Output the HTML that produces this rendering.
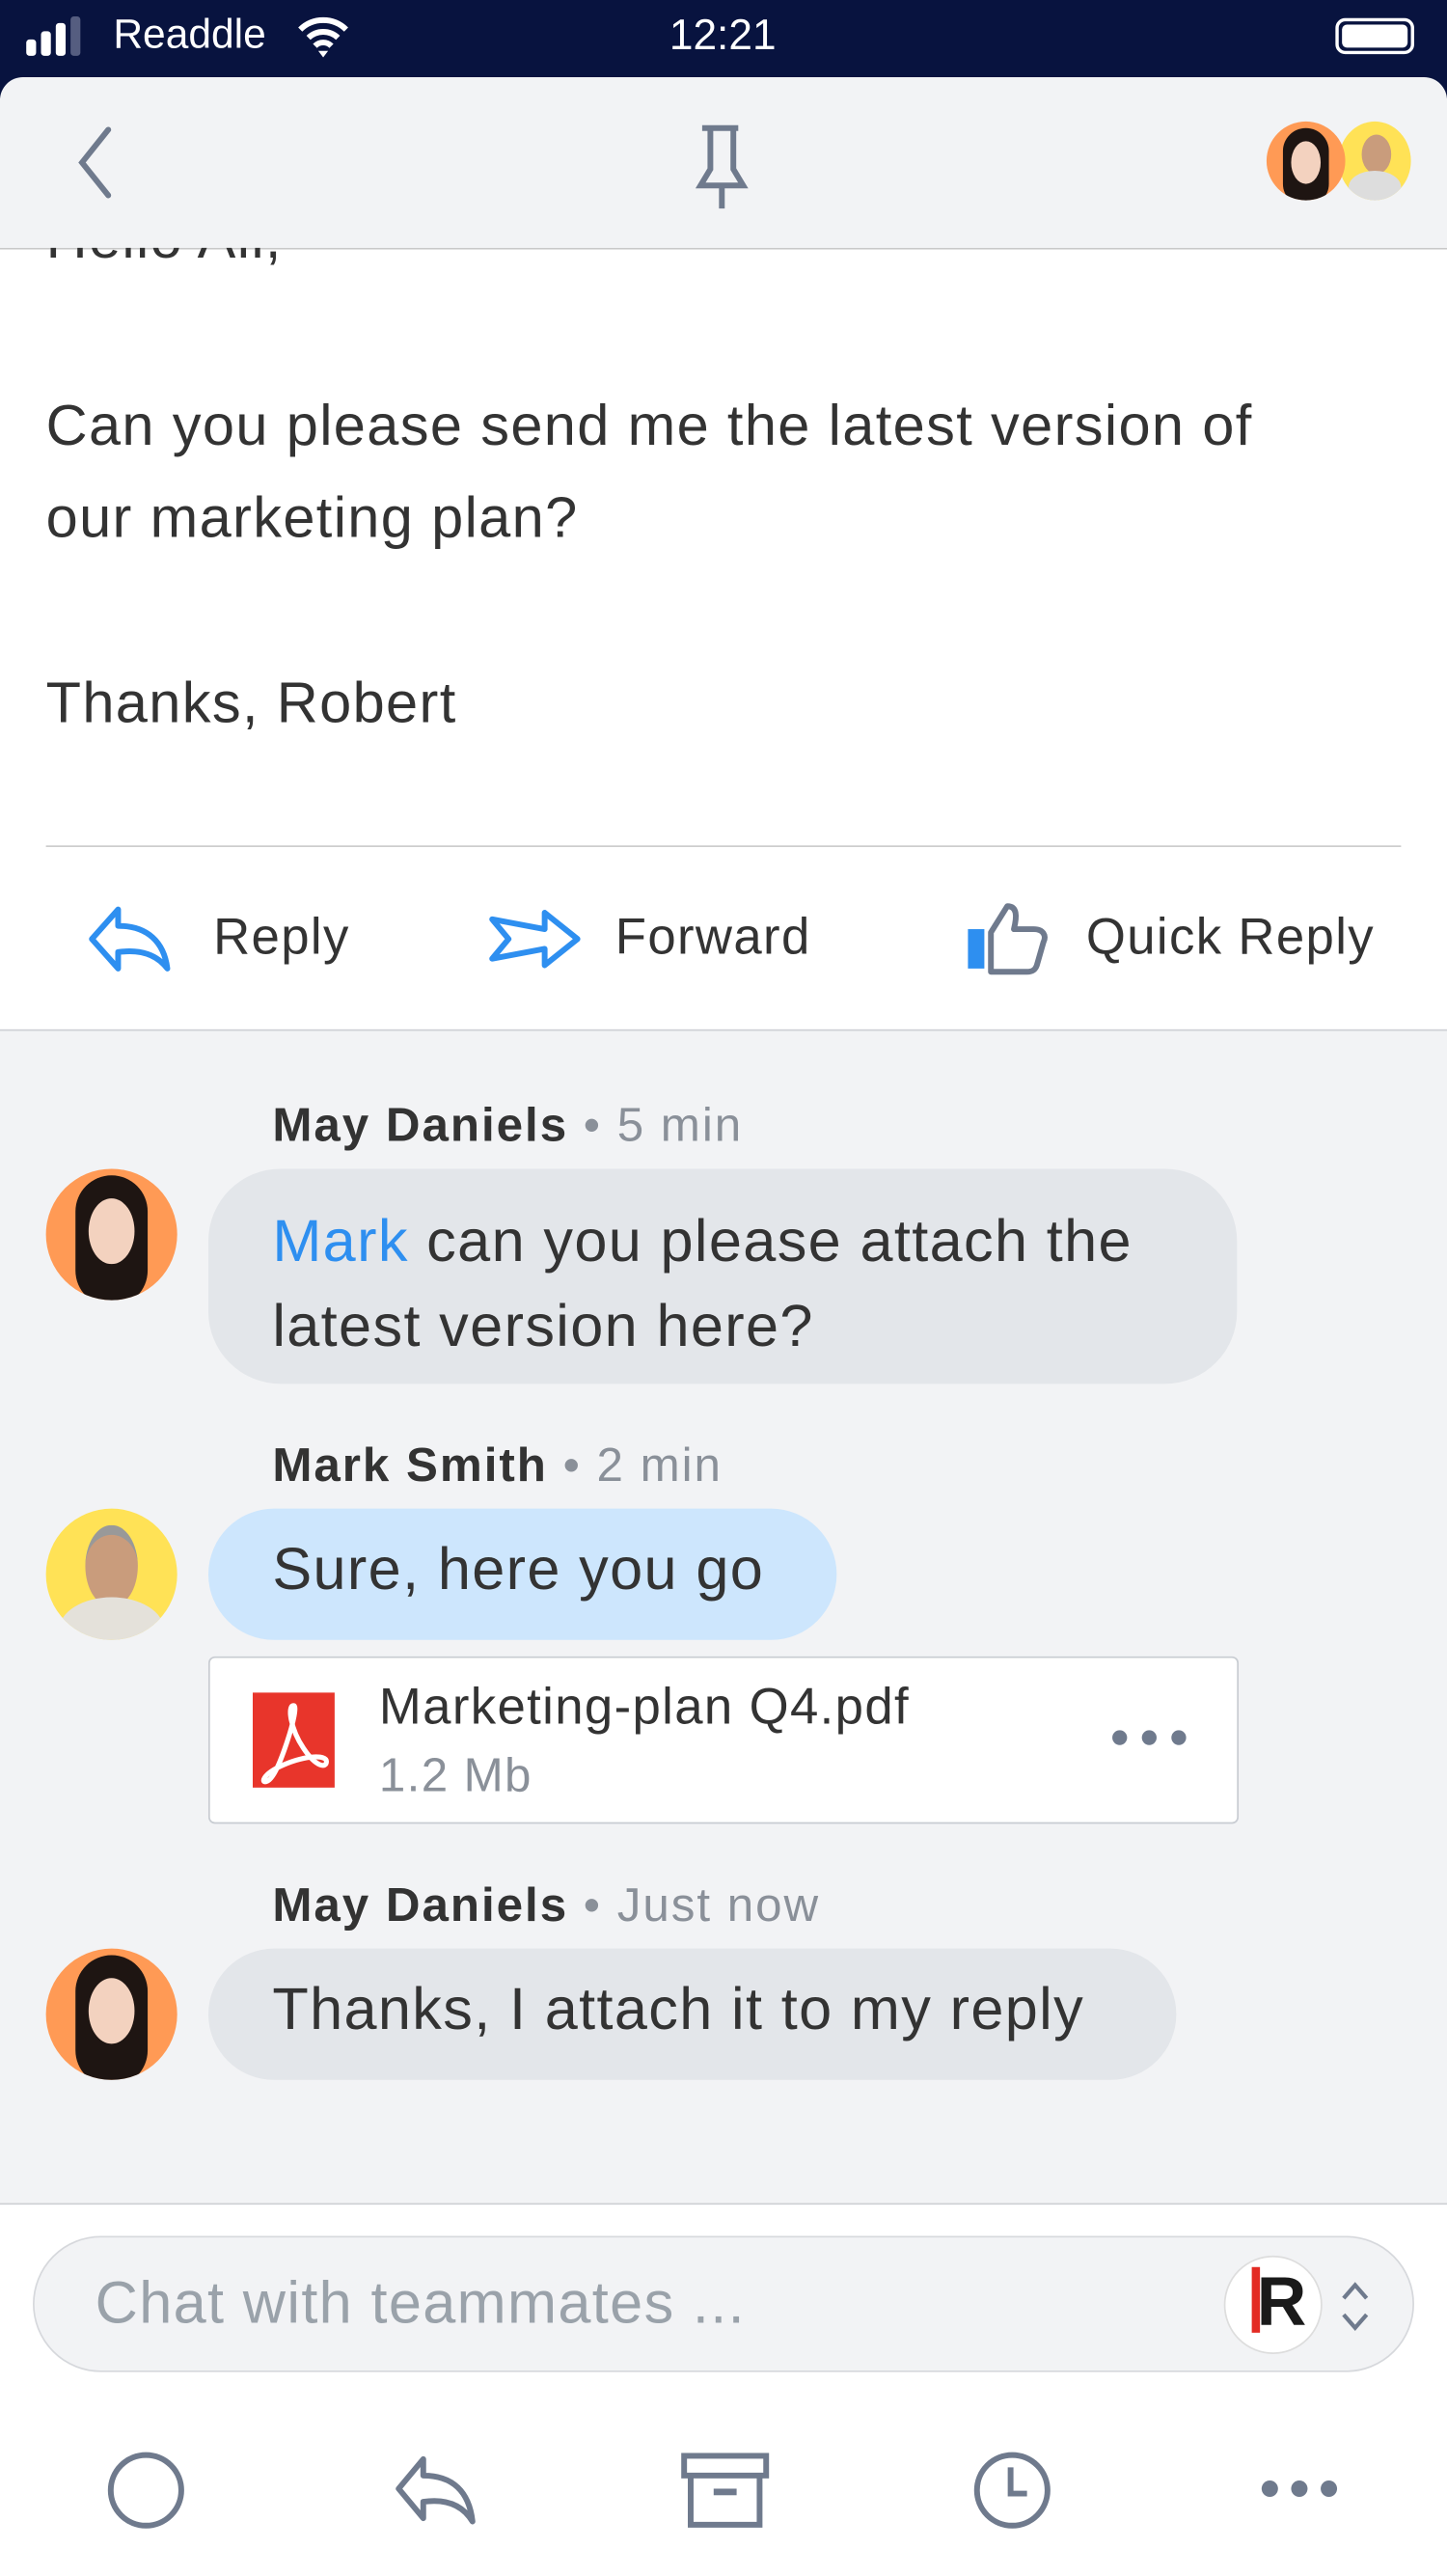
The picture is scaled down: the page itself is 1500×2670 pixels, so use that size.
<!DOCTYPE html>
<html><head><meta charset="utf-8"><style>
html,body{margin:0;padding:0;width:1500px;height:2668px;overflow:hidden;background:#fff}
#w{position:absolute;left:0;top:0;width:882px;height:1569px;transform:scale(1.70068,1.7015);transform-origin:0 0;font-family:"Liberation Sans",sans-serif;background:#fff;letter-spacing:0.05em}
.a{position:absolute}
.t{color:#333;font-size:35px;white-space:nowrap}
.av{position:absolute;width:80px;height:80px;border-radius:50%;overflow:hidden}
.nm{font-size:29px;font-weight:bold;color:#333;white-space:nowrap;letter-spacing:0.04em}
.tm{font-weight:normal;color:#8a9099}
.b{position:absolute;border-radius:40px;font-size:36px;color:#333;white-space:nowrap}
</style></head><body><div id="w">
<div class="a" style="left:0;top:0;width:882px;height:60px;background:#08133f"></div>
<div class="a" style="left:16px;top:24px;width:6px;height:10px;background:#fff;border-radius:2px"></div>
<div class="a" style="left:25px;top:19px;width:6px;height:15px;background:#fff;border-radius:2px"></div>
<div class="a" style="left:34px;top:14px;width:6px;height:20px;background:#fff;border-radius:2px"></div>
<div class="a" style="left:43px;top:10px;width:6px;height:24px;background:#555d80;border-radius:2px"></div>
<div class="a" style="left:69px;top:7px;color:#fff;font-size:25px;letter-spacing:0">Readdle</div>
<svg class="a" style="left:180px;top:8px" width="34" height="28" viewBox="0 0 34 28"><path d="M3 10a20 20 0 0 1 28 0M8 15a13 13 0 0 1 18 0M12 20a7 7 0 0 1 10 0" stroke="#fff" stroke-width="3.5" fill="none"/><path d="M14 23l3 4 3-4z" fill="#fff"/></svg>
<div class="a" style="left:408px;top:6px;color:#fff;font-size:26px;letter-spacing:0">12:21</div>
<div class="a" style="left:814px;top:11px;width:48px;height:22px;border:2px solid #fff;border-radius:6px;box-sizing:border-box;padding:2px"><div style="background:#fff;width:100%;height:100%;border-radius:3px"></div></div>
<div class="a" style="left:0;top:47px;width:882px;height:104px;background:#f2f3f5;border-radius:14px 14px 0 0;border-bottom:1px solid #c8c8c8"></div>
<svg class="a" style="left:38px;top:75px" width="34" height="48"><path d="M28 4L12 24l16 20" stroke="#6f7a8d" stroke-width="3.5" fill="none" stroke-linecap="round"/></svg>
<svg class="a" style="left:418px;top:74px" width="48" height="54" viewBox="0 0 48 54"><path d="M10 4h22M15 5v24l-6 10h26l-6-10V5M22 39v14" stroke="#6f7a8d" stroke-width="3.5" fill="none"/></svg>
<div class="av" style="left:816px;top:74px;width:44px;height:48px;background:#ffe256"><div style="position:absolute;left:14px;top:8px;width:18px;height:24px;border-radius:50%;background:#c99c7c"></div><div style="position:absolute;left:6px;top:30px;width:32px;height:20px;border-radius:50%;background:#ddd"></div></div>
<div class="av" style="left:772px;top:74px;width:48px;height:48px;background:#ff9a55"><div style="position:absolute;left:10px;top:4px;width:28px;height:48px;border-radius:14px;background:#1e1512"></div><div style="position:absolute;left:15px;top:12px;width:18px;height:26px;border-radius:50%;background:#f3d2bf"></div></div>
<div class="a t" style="left:28px;top:126px;clip-path:inset(25px 0 0 0)">Hello All,</div>
<div class="a t" style="left:28px;top:240px">Can you please send me the latest version of</div>
<div class="a t" style="left:28px;top:296px">our marketing plan?</div>
<div class="a t" style="left:28px;top:409px">Thanks, Robert</div>
<div class="a" style="left:28px;top:515px;width:826px;height:1px;background:#ccc"></div>
<svg class="a" style="left:52px;top:550px" width="56" height="44" viewBox="0 0 56 44"><path d="M20 4L4 22l16 18V30c14-2 24 2 30 10C48 24 38 14 20 14z" stroke="#2e8ff0" stroke-width="3.5" fill="none" stroke-linejoin="round"/></svg>
<div class="a t" style="left:130px;top:553px;font-size:31px">Reply</div>
<svg class="a" style="left:296px;top:552px" width="60" height="40" viewBox="0 0 60 40"><path d="M36 4l20 16-20 16V26L4 32l10-12L4 8l32 6z" stroke="#2e8ff0" stroke-width="3.5" fill="none" stroke-linejoin="round"/></svg>
<div class="a t" style="left:375px;top:553px;font-size:31px">Forward</div>
<svg class="a" style="left:588px;top:548px" width="52" height="46" viewBox="0 0 52 46"><rect x="2" y="18" width="10" height="24" fill="#2e8ff0"/><path d="M16 20l10-16c6 0 6 6 4 14h12c6 0 8 4 6 8l-4 14c-1 3-3 4-6 4H16z" stroke="#6f7a8d" stroke-width="3.5" fill="none" stroke-linejoin="round"/></svg>
<div class="a t" style="left:662px;top:553px;font-size:31px">Quick Reply</div>
<div class="a" style="left:0;top:627px;width:882px;height:715px;background:#f2f3f5;border-top:1px solid #cfd2d6"></div>
<div class="av" style="left:28px;top:712px;background:#ff9a55"><div style="position:absolute;left:18px;top:4px;width:44px;height:80px;border-radius:22px;background:#1e1512"></div><div style="position:absolute;left:26px;top:18px;width:28px;height:40px;border-radius:50%;background:#f3d2bf"></div></div>
<div class="a nm" style="left:166px;top:670px">May Daniels <span class="tm">• 5 min</span></div>
<div class="b" style="left:127px;top:712px;width:627px;height:131px;background:#e3e6ea;box-sizing:border-box;padding:18px 0 0 39px;line-height:52px;border-radius:44px"><span style="color:#2e8ff0">Mark</span> can you please attach the<br>latest version here?</div>
<div class="av" style="left:28px;top:919px;background:#ffe256"><div style="position:absolute;left:24px;top:10px;width:32px;height:44px;border-radius:50%;background:#c99c7c;border-top:6px solid #999"></div><div style="position:absolute;left:8px;top:54px;width:64px;height:40px;border-radius:50%;background:#e4e1da"></div></div>
<div class="a nm" style="left:166px;top:877px">Mark Smith <span class="tm">• 2 min</span></div>
<div class="b" style="left:127px;top:919px;width:383px;height:80px;background:#cde6fd;box-sizing:border-box;padding:16px 0 0 39px">Sure, here you go</div>
<div class="a" style="left:127px;top:1009px;width:628px;height:102px;background:#fff;border:1px solid #c8ccd2;border-radius:4px;box-sizing:border-box"></div>
<svg class="a" style="left:154px;top:1031px" width="50" height="58" viewBox="0 0 50 58"><rect width="50" height="58" fill="#e8352b"/><path d="M25 8c-4 0-2 14 6 26s14 12 14 8-12-4-26 2-14 12-10 10 8-12 12-24 6-22 4-22z" stroke="#fff" stroke-width="3" fill="none"/></svg>
<div class="a t" style="left:231px;top:1022px;font-size:31px">Marketing-plan Q4.pdf</div>
<div class="a t" style="left:231px;top:1066px;font-size:29px;color:#8a9099">1.2 Mb</div>
<div class="a" style="left:678px;top:1054px;font-size:0"><span style="display:inline-block;width:9px;height:9px;border-radius:50%;background:#6f7a8d;margin-right:9px"></span><span style="display:inline-block;width:9px;height:9px;border-radius:50%;background:#6f7a8d;margin-right:9px"></span><span style="display:inline-block;width:9px;height:9px;border-radius:50%;background:#6f7a8d"></span></div>
<div class="av" style="left:28px;top:1187px;background:#ff9a55"><div style="position:absolute;left:18px;top:4px;width:44px;height:80px;border-radius:22px;background:#1e1512"></div><div style="position:absolute;left:26px;top:18px;width:28px;height:40px;border-radius:50%;background:#f3d2bf"></div></div>
<div class="a nm" style="left:166px;top:1145px">May Daniels <span class="tm">• Just now</span></div>
<div class="b" style="left:127px;top:1187px;width:590px;height:80px;background:#e3e6ea;box-sizing:border-box;padding:16px 0 0 39px">Thanks, I attach it to my reply</div>
<div class="a" style="left:0;top:1342px;width:882px;height:1px;background:#cfd2d6"></div>
<div class="a" style="left:20px;top:1362px;width:842px;height:83px;background:#f2f3f5;border:1px solid #d6d8dc;border-radius:42px;box-sizing:border-box"></div>
<div class="a" style="left:58px;top:1382px;font-size:36px;color:#9aa2aa">Chat with teammates ...</div>
<div class="a" style="left:746px;top:1374px;width:60px;height:60px;border-radius:50%;background:#fff;border:1px solid #ddd;box-sizing:border-box"></div>
<div class="a" style="left:763px;top:1381px;width:5px;height:40px;background:#e32b23"></div>
<div class="a" style="left:766px;top:1378px;font-size:42px;font-weight:bold;color:#1a1a1a;letter-spacing:0">R</div>
<svg class="a" style="left:814px;top:1388px" width="24" height="34"><path d="M5 12l7-8 7 8M5 22l7 8 7-8" stroke="#6f7a8d" stroke-width="2.5" fill="none"/></svg>
<svg class="a" style="left:64px;top:1492px" width="50" height="50"><circle cx="25" cy="25" r="21.5" stroke="#6f7a8d" stroke-width="3.5" fill="none"/></svg>
<svg class="a" style="left:240px;top:1496px" width="54" height="42" viewBox="0 0 54 42"><path d="M18 2L3 20l15 18V28c14-2 24 2 30 12C46 22 36 12 18 12z" stroke="#6f7a8d" stroke-width="3.5" fill="none" stroke-linejoin="round"/></svg>
<svg class="a" style="left:415px;top:1494px" width="54" height="46" viewBox="0 0 54 46"><rect x="2" y="2" width="50" height="12" stroke="#6f7a8d" stroke-width="3.5" fill="none"/><path d="M6 14v30h42V14" stroke="#6f7a8d" stroke-width="3.5" fill="none"/><rect x="20" y="22" width="14" height="4" fill="#6f7a8d"/></svg>
<svg class="a" style="left:592px;top:1492px" width="50" height="50"><circle cx="25" cy="25" r="21.5" stroke="#6f7a8d" stroke-width="3.5" fill="none"/><path d="M24 11v16h10" stroke="#6f7a8d" stroke-width="3.5" fill="none"/></svg>
<div class="a" style="left:769px;top:1511px;font-size:0"><span style="display:inline-block;width:10px;height:10px;border-radius:50%;background:#6f7a8d;margin-right:8px"></span><span style="display:inline-block;width:10px;height:10px;border-radius:50%;background:#6f7a8d;margin-right:8px"></span><span style="display:inline-block;width:10px;height:10px;border-radius:50%;background:#6f7a8d"></span></div>
</div></body></html>
